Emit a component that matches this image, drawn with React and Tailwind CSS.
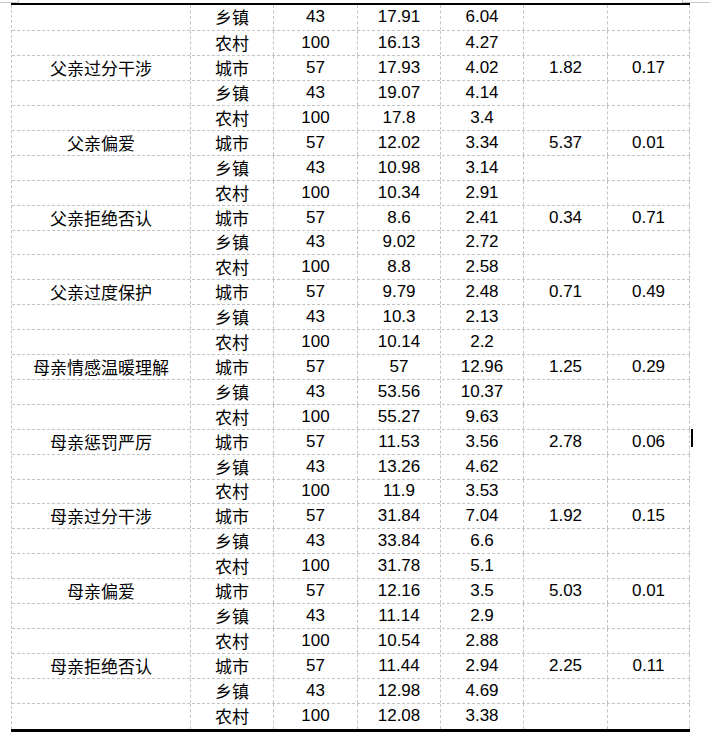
import React from 'react'

// rows: [label, area, n, mean, sd, F, p]
const groups = [
  { label: '', rows: [['乡镇', '43', '17.91', '6.04'], ['农村', '100', '16.13', '4.27']] },
  { label: '父亲过分干涉', f: '1.82', p: '0.17', rows: [['城市', '57', '17.93', '4.02'], ['乡镇', '43', '19.07', '4.14'], ['农村', '100', '17.8', '3.4']] },
  { label: '父亲偏爱', f: '5.37', p: '0.01', rows: [['城市', '57', '12.02', '3.34'], ['乡镇', '43', '10.98', '3.14'], ['农村', '100', '10.34', '2.91']] },
  { label: '父亲拒绝否认', f: '0.34', p: '0.71', rows: [['城市', '57', '8.6', '2.41'], ['乡镇', '43', '9.02', '2.72'], ['农村', '100', '8.8', '2.58']] },
  { label: '父亲过度保护', f: '0.71', p: '0.49', rows: [['城市', '57', '9.79', '2.48'], ['乡镇', '43', '10.3', '2.13'], ['农村', '100', '10.14', '2.2']] },
  { label: '母亲情感温暖理解', f: '1.25', p: '0.29', rows: [['城市', '57', '57', '12.96'], ['乡镇', '43', '53.56', '10.37'], ['农村', '100', '55.27', '9.63']] },
  { label: '母亲惩罚严厉', f: '2.78', p: '0.06', rows: [['城市', '57', '11.53', '3.56'], ['乡镇', '43', '13.26', '4.62'], ['农村', '100', '11.9', '3.53']] },
  { label: '母亲过分干涉', f: '1.92', p: '0.15', rows: [['城市', '57', '31.84', '7.04'], ['乡镇', '43', '33.84', '6.6'], ['农村', '100', '31.78', '5.1']] },
  { label: '母亲偏爱', f: '5.03', p: '0.01', rows: [['城市', '57', '12.16', '3.5'], ['乡镇', '43', '11.14', '2.9'], ['农村', '100', '10.54', '2.88']] },
  { label: '母亲拒绝否认', f: '2.25', p: '0.11', rows: [['城市', '57', '11.44', '2.94'], ['乡镇', '43', '12.98', '4.69'], ['农村', '100', '12.08', '3.38']] },
]

// flatten into table rows
const rows = []
groups.forEach((g) => {
  g.rows.forEach((r, i) => {
    const first = i === 0 && g.label
    rows.push([first ? g.label : '', ...r, first ? g.f : '', first ? g.p : ''])
  })
})

const widths = ['w-[179px]', 'w-[83px]', 'w-[84px]', 'w-[83px]', 'w-[83px]', 'w-[84px]', 'w-[82px]']

// the sheet's row pitch is a hair under 25px
function rowHeight(index) {
  if (index === 0) return 'h-[26px]'
  if (index === 9 || index === 19) return 'h-[24px]'
  return 'h-[25px]'
}

function Row({ cells, index, last }) {
  return (
    <div className={`flex ${rowHeight(index)} ${last ? '' : 'border-b border-dashed border-[#c4c4c4]'}`}>
      {cells.map((c, j) => (
        <div
          key={j}
          className={`${widths[j]} shrink-0 flex items-center justify-center pb-[2px] border-r border-dashed border-[#c4c4c4] leading-none ${
            j < 2 ? 'text-[17px] font-["Noto_Sans_CJK_SC",sans-serif]' : 'text-[17px] font-["Liberation_Sans",Arial,sans-serif]'
          }`}
        >
          {c}
        </div>
      ))}
    </div>
  )
}

export default function App() {
  return (
    <div className="relative w-[716px] h-[732px] bg-white overflow-hidden text-black">
      {/* faint edge of the neighbouring cells */}
      <div className="flex h-[3px]">
        <div className="w-[19px] border-b border-r border-[#c8c8c8]" />
        <div className="w-[663px]" />
        <div className="w-[28px] border-b border-l border-[#c8c8c8]" />
      </div>

      {/* table */}
      <div className="ml-[11px] w-[679px] border-t-2 border-black">
        <div className="border-l border-dashed border-[#c4c4c4]">
          {rows.map((r, i) => (
            <Row key={i} cells={r} index={i} last={i === rows.length - 1} />
          ))}
        </div>
        <div className="h-[3px] bg-black" />
      </div>

      {/* text cursor */}
      <div className="absolute left-[691px] top-[429px] w-[2px] h-[18px] bg-black" />
    </div>
  )
}
